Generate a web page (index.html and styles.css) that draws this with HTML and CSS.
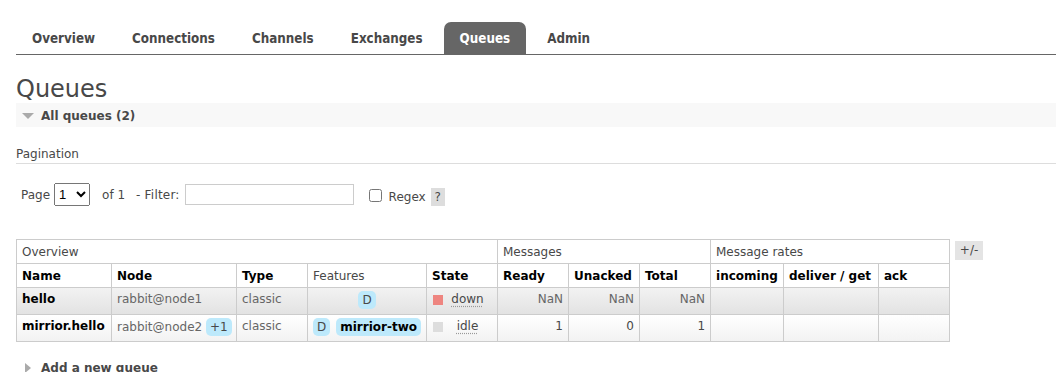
FILE: index.html
```html
<!DOCTYPE html>
<html lang="en">
<head>
  <meta charset="UTF-8">
  <title>RabbitMQ Management - Queues</title>
  <link rel="stylesheet" href="styles.css">
</head>
<body>

<div id="main">
  <ul class="tabs">
    <li><a href="#">Overview</a></li>
    <li><a href="#">Connections</a></li>
    <li><a href="#">Channels</a></li>
    <li><a href="#">Exchanges</a></li>
    <li><a href="#" class="selected">Queues</a></li>
    <li><a href="#">Admin</a></li>
  </ul>

  <h1>Queues</h1>

  <div class="section">
    <h2 class="section-head"><span class="tri-down"></span>All queues (2)</h2>
    <div class="section-body">
      <h3 class="sub-head">Pagination</h3>
      <div class="filter">
        <label class="lbl-page">Page</label>
        <select class="page-select"><option>1</option></select>
        <span class="of">of 1</span>
        <label class="lbl-filter">- Filter:</label>
        <input type="text" class="filter-input">
        <input type="checkbox" class="regex-box" id="regex">
        <label for="regex" class="lbl-regex">Regex</label>
        <span class="help">?</span>
      </div>

      <div class="table-wrap">
        <table class="list">
          <colgroup>
            <col class="c-name"><col class="c-node"><col class="c-type"><col class="c-feat"><col class="c-state">
            <col class="c-num"><col class="c-num"><col class="c-num">
            <col class="c-inc"><col class="c-del"><col class="c-ack">
          </colgroup>
          <thead>
            <tr class="group">
              <th colspan="5">Overview</th>
              <th colspan="3">Messages</th>
              <th colspan="3">Message rates</th>
            </tr>
            <tr class="cols">
              <th>Name</th>
              <th>Node</th>
              <th>Type</th>
              <th class="plain">Features</th>
              <th>State</th>
              <th>Ready</th>
              <th>Unacked</th>
              <th>Total</th>
              <th>incoming</th>
              <th>deliver / get</th>
              <th>ack</th>
            </tr>
          </thead>
          <tbody>
            <tr class="alt1">
              <td class="name">hello</td>
              <td class="grey">rabbit@node1</td>
              <td class="grey">classic</td>
              <td><div class="features"><span class="tag">D</span></div></td>
              <td><div class="state"><span class="dot red"></span><abbr>down</abbr></div></td>
              <td class="num grey">NaN</td>
              <td class="num grey">NaN</td>
              <td class="num grey">NaN</td>
              <td></td>
              <td></td>
              <td></td>
            </tr>
            <tr class="alt2">
              <td class="name">mirrior.hello</td>
              <td class="grey">rabbit@node2 <span class="tag">+1</span></td>
              <td class="grey">classic</td>
              <td><div class="features"><span class="tag">D</span><span class="tag policy">mirrior-two</span></div></td>
              <td><div class="state"><span class="dot idle"></span><abbr>idle</abbr></div></td>
              <td class="num">1</td>
              <td class="num">0</td>
              <td class="num">1</td>
              <td></td>
              <td></td>
              <td></td>
            </tr>
          </tbody>
        </table>
        <span class="toggle">+/-</span>
      </div>
    </div>
  </div>

  <div class="section">
    <h2 class="section-head closed"><span class="tri-right"></span>Add a new queue</h2>
  </div>
</div>

</body>
</html>
```

FILE: styles.css
```css
body {
  margin: 0;
  font-family: "DejaVu Sans", Verdana, sans-serif;
  font-size: 12px;
  color: #484848;
  background: #ffffff;
}
#main {
  padding: 22px 0 0 16px;
}

/* top navigation */
.tabs {
  list-style: none;
  margin: 0;
  padding: 0;
  display: flex;
  border-bottom: 1px solid #666;
}
.tabs li {
  margin-right: 5px;
}
.tabs a {
  display: block;
  height: 32px;
  line-height: 34px;
  padding: 0 16px;
  font-family: "DejaVu Sans Condensed", "DejaVu Sans", sans-serif;
  font-size: 13.3px;
  font-weight: bold;
  color: #484848;
  text-decoration: none;
  border-radius: 7px 7px 0 0;
}
.tabs a.selected {
  background: #666;
  color: #fff;
}

h1 {
  margin: 21px 0 0;
  font-size: 24px;
  line-height: 27px;
  font-weight: normal;
  color: #484848;
}

/* collapsible sections */
.section-head {
  display: flex;
  align-items: center;
  margin: 0;
  height: 24px;
  padding-left: 6px;
  padding-top: 1px;
  box-sizing: border-box;
  background: #f8f8f8;
  font-size: 12px;
  font-weight: bold;
}
.section-head.closed {
  background: none;
  margin-top: 13px;
}
.tri-down {
  width: 0;
  height: 0;
  border-left: 6px solid transparent;
  border-right: 6px solid transparent;
  border-top: 6px solid #aaa;
  margin-right: 7px;
}
.tri-right {
  width: 0;
  height: 0;
  border-top: 5px solid transparent;
  border-bottom: 5px solid transparent;
  border-left: 6px solid #aaa;
  margin: 0 10px 0 3px;
}
.sub-head {
  margin: 19px 0 0;
  padding-bottom: 1px;
  font-size: 12px;
  line-height: 16px;
  font-weight: normal;
  border-bottom: 1px solid #ddd;
}

/* pagination / filter row */
.filter {
  display: flex;
  align-items: center;
  margin-top: 19px;
  padding-left: 5px;
  height: 23px;
}
.page-select {
  width: 36px;
  height: 23px;
  margin: 0 12px 0 4px;
  font-size: 13px;
}
.of {
  margin-right: 11px;
}
.lbl-filter {
  letter-spacing: 0.2px;
}
.filter-input {
  width: 169px;
  height: 21px;
  box-sizing: border-box;
  margin: 0 0 0 5px;
  border: 1px solid #ccc;
}
.regex-box {
  width: 13px;
  height: 13px;
  margin: 2px 7px 0 15px;
}
.lbl-regex {
  margin-top: 4px;
}
.help {
  margin: 4px 0 0 5px;
  width: 14px;
  height: 18px;
  line-height: 18px;
  text-align: center;
  background: #ddd;
}

/* queue table */
.table-wrap {
  display: flex;
  align-items: flex-start;
  margin-top: 33px;
}
table.list {
  border-collapse: collapse;
  table-layout: fixed;
  width: 933px;
}
.c-name { width: 95px; }
.c-node { width: 125px; }
.c-type { width: 71px; }
.c-feat { width: 119px; }
.c-state { width: 71px; }
.c-num { width: 71px; }
.c-inc { width: 73px; }
.c-del { width: 95px; }
.c-ack { width: 71px; }
table.list th,
table.list td {
  border: 1px solid #ccc;
  padding: 0 5px;
  text-align: left;
  white-space: nowrap;
}
table.list th {
  height: 23px;
  font-weight: bold;
  color: #000;
}
table.list tr.group th {
  font-weight: normal;
  color: #484848;
}
table.list th.plain {
  font-weight: normal;
  color: #484848;
}
table.list td {
  height: 27px;
  vertical-align: top;
  padding-top: 3px;
  padding-bottom: 0;
  line-height: 17px;
  box-sizing: border-box;
}
tr.alt1 {
  background: linear-gradient(#f2f2f2, #e2e2e2);
}
tr.alt2 {
  background: linear-gradient(#ffffff, #f2f2f2);
}
td.name {
  font-weight: bold;
  color: #000;
}
td.grey {
  color: #666;
}
td.num {
  text-align: right !important;
}
.tag {
  display: inline-block;
  padding: 0 4px;
  line-height: 18px;
  border-radius: 5px;
  background: #bde9fb;
  color: #484848;
}
td .tag + .tag {
  margin-left: 6px;
}
.tag.policy {
  font-weight: bold;
  color: #000;
}
.features {
  display: flex;
  justify-content: center;
}
.state {
  display: flex;
  align-items: center;
  height: 17px;
}
.dot {
  width: 10px;
  height: 10px;
  margin-left: 1px;
}
.dot.red {
  background: #ee8580;
}
.dot.idle {
  background: #ddd;
}
.state abbr {
  flex: 1;
  text-align: center;
  text-decoration: underline dotted #999;
  text-underline-offset: 3px;
}
.toggle {
  margin: 2px 0 0 5px;
  width: 28px;
  height: 19px;
  line-height: 19px;
  text-align: center;
  background: #e4e4e4;
}
```
